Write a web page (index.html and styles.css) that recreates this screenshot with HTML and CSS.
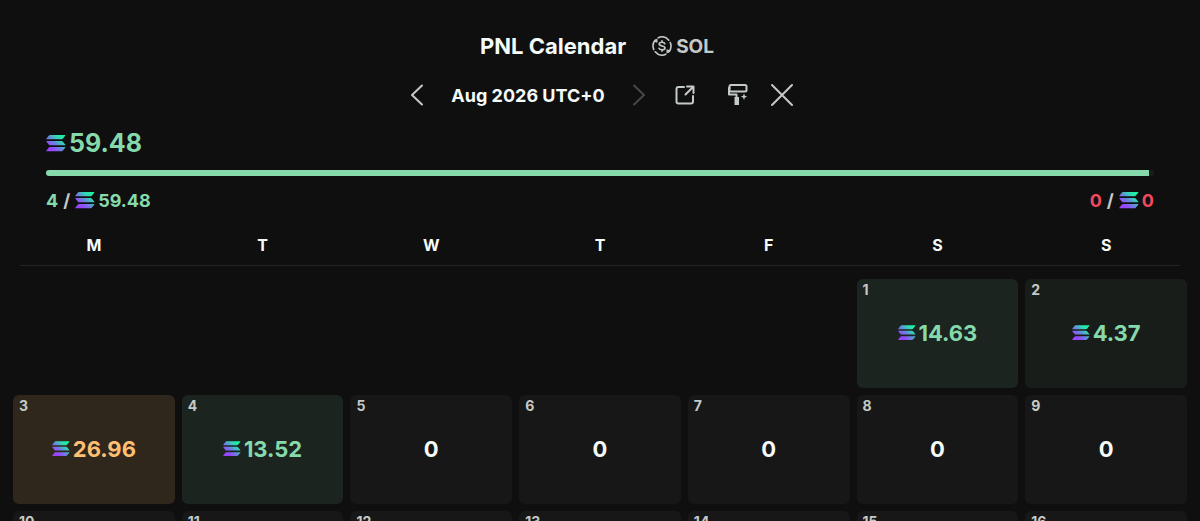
FILE: index.html
```html
<!DOCTYPE html>
<html lang="en">
<head>
    <meta charset="UTF-8">
    <meta name="viewport" content="width=device-width, initial-scale=1.0">
    <title>PNL Calendar</title>
    <link rel="stylesheet" href="styles.css">
</head>
<body>
    <svg class="sprite" aria-hidden="true">
        <defs>
            <linearGradient id="solGradient" gradientUnits="userSpaceOnUse" x1="18" y1="1" x2="4" y2="16">
                <stop offset="0" stop-color="#19f5a0"/>
                <stop offset="0.25" stop-color="#2fdcb0"/>
                <stop offset="0.55" stop-color="#6488dc"/>
                <stop offset="0.85" stop-color="#9945ff"/>
            </linearGradient>
            <symbol id="sol" viewBox="0 0 20 17">
                <path fill="url(#solGradient)" d="M4 0h14.800q1 0 .4.8l-2.500 3q-.5.5-1.200.5H.9q-1 0-.4-.8l2.400-3Q3.300 0 4 0zM.9 6h14.600q.7 0 1.200.5l2.500 3q.6.8-.4.8H4q-.7 0-1.100-.5l-2.400-3Q-.1 6 .9 6zM4 12h14.800q1 0 .4.8l-2.500 3q-.5.5-1.200.5H.9q-1 0-.4-.8l2.400-3q.4-.5 1.100-.5z"/>
            </symbol>
        </defs>
    </svg>

    <main class="app">
        <header class="title-row">
            <h1 class="title">PNL Calendar</h1>
            <button class="currency">
                <svg width="20" height="20" viewBox="0 0 20 20" fill="none" stroke="currentColor" stroke-width="1.600" stroke-linecap="round" aria-hidden="true">
                    <path d="M6.300 1.700A9 9 0 0 1 16.800 4.200M18.300 6.600A9 9 0 0 1 16.600 16M13.700 18.300A9 9 0 0 1 3.200 15.800M1.700 13.400A9 9 0 0 1 3.400 4"/>
                    <path fill="currentColor" stroke="none" d="M1 5.200l4.600-3-.2 4.600zM19 14.800l-4.600 3 .2-4.600z"/>
                    <path d="M12.800 7.800c-.3-1-1.300-1.500-2.800-1.500-1.600 0-2.800.6-2.800 1.800 0 2.600 5.800 1.200 5.800 3.900 0 1.200-1.300 1.800-3 1.800-1.600 0-2.700-.6-3-1.500M10 4.800v1.500M10 13.800v1.500"/>
                </svg>
                SOL
            </button>
        </header>

        <nav class="month-nav">
            <button class="icon-button" aria-label="Previous month">
                <svg width="14" height="22" viewBox="0 0 14 22"><path d="M12 1.500 2 11l10 9.500"/></svg>
            </button>
            <span class="month">Aug 2026 UTC+0</span>
            <button class="icon-button" aria-label="Next month" disabled>
                <svg width="14" height="22" viewBox="0 0 14 22"><path d="M2 1.500 12 11 2 20.500"/></svg>
            </button>
            <div class="actions">
                <button class="icon-button" aria-label="Share">
                    <svg width="24" height="24" viewBox="0 0 24 24"><path d="M11 4H5.500q-2 0-2 2v12.500q0 2 2 2H18q2 0 2-2V13M14 3.500h6.500V10M20 4l-7.500 7.500"/></svg>
                </button>
                <button class="icon-button" aria-label="Customize">
                    <svg width="24" height="24" viewBox="0 0 24 24"><rect x="3.500" y="2" width="17" height="6.500" rx="1.500"/><path d="M3.500 5H3v6.500h7.500V14"/><path class="solid" d="M8.500 14h4.500v8H8.500zM18 10.500l.9 2.300 2.300.9-2.300.9L18 16.900l-.9-2.300-2.300-.9 2.300-.9z"/></svg>
                </button>
            </div>
            <button class="icon-button" aria-label="Close">
                <svg width="24" height="24" viewBox="0 0 24 24"><path d="M2 2l20 20M22 2 2 22"/></svg>
            </button>
        </nav>

        <section class="summary">
            <div class="total amount gain"><svg class="sol"><use href="#sol"/></svg>59.48</div>
            <div class="bar"><div class="bar-fill"></div></div>
            <div class="split">
                <div class="amount gain">4 <span class="slash">/</span> <svg class="sol"><use href="#sol"/></svg>59.48</div>
                <div class="amount loss">0 <span class="slash">/</span> <svg class="sol"><use href="#sol"/></svg>0</div>
            </div>
        </section>

        <table class="calendar">
            <thead>
                <tr class="week weekdays">
                    <th>M</th><th>T</th><th>W</th><th>T</th><th>F</th><th>S</th><th>S</th>
                </tr>
            </thead>
            <tbody class="weeks">
                <tr class="week">
                    <td></td><td></td><td></td><td></td><td></td>
                    <td class="day win"><span class="date">1</span><span class="amount"><svg class="sol"><use href="#sol"/></svg>14.63</span></td>
                    <td class="day small-win"><span class="date">2</span><span class="amount"><svg class="sol"><use href="#sol"/></svg>4.37</span></td>
                </tr>
                <tr class="week">
                    <td class="day best"><span class="date">3</span><span class="amount"><svg class="sol"><use href="#sol"/></svg>26.96</span></td>
                    <td class="day win"><span class="date">4</span><span class="amount"><svg class="sol"><use href="#sol"/></svg>13.52</span></td>
                    <td class="day"><span class="date">5</span><span class="amount">0</span></td>
                    <td class="day"><span class="date">6</span><span class="amount">0</span></td>
                    <td class="day"><span class="date">7</span><span class="amount">0</span></td>
                    <td class="day"><span class="date">8</span><span class="amount">0</span></td>
                    <td class="day"><span class="date">9</span><span class="amount">0</span></td>
                </tr>
                <tr class="week">
                    <td class="day"><span class="date">10</span></td>
                    <td class="day"><span class="date">11</span></td>
                    <td class="day"><span class="date">12</span></td>
                    <td class="day"><span class="date">13</span></td>
                    <td class="day"><span class="date">14</span></td>
                    <td class="day"><span class="date">15</span></td>
                    <td class="day"><span class="date">16</span></td>
                </tr>
            </tbody>
        </table>
    </main>
</body>
</html>
```

FILE: styles.css
```css
* {
    margin: 0;
    padding: 0;
    box-sizing: border-box;
}

body {
    font-family: Inter, "Liberation Sans", sans-serif;
    font-weight: 700;
    background: #0f0f0f;
    color: #f5fbf8;
}

button {
    font: inherit;
    color: #c4cac7;
    background: none;
    border: none;
    cursor: pointer;
}

.sprite {
    position: absolute;
    width: 0;
    height: 0;
}

.app {
    height: 100vh;
    overflow: hidden;
    padding-top: 28px;
}

.title-row {
    display: flex;
    align-items: center;
    justify-content: center;
    gap: 26px;
    height: 36px;
    padding-right: 6px;
}

.title {
    font-size: 22px;
    font-weight: 700;
}

.currency {
    display: flex;
    align-items: center;
    gap: 4px;
    font-size: 19px;
}

.month-nav {
    display: flex;
    align-items: center;
    justify-content: center;
    gap: 20px;
    height: 36px;
    margin-top: 13px;
    padding-left: 4px;
}

.month {
    padding: 0 7px;
    font-size: 18px;
}

.icon-button {
    display: flex;
}

.icon-button svg {
    fill: none;
    stroke: currentColor;
    stroke-width: 2;
    stroke-linecap: round;
    stroke-linejoin: round;
}

.icon-button .solid {
    fill: currentColor;
    stroke: none;
}

.icon-button:disabled {
    color: #484848;
    cursor: default;
}

.actions {
    display: flex;
    align-items: center;
    gap: 29px;
    padding-left: 7px;
}

.summary {
    padding: 0 46px;
    margin-top: 12px;
}

.amount {
    display: flex;
    align-items: center;
    gap: 3px;
}

.sol {
    width: 20px;
    height: 17px;
    flex-shrink: 0;
}

.gain {
    color: #86d9ab;
}

.loss {
    color: #f2495c;
}

.slash {
    padding: 0 2px;
    color: #c4cac7;
}

.total {
    height: 36px;
    font-size: 25px;
}

.bar {
    height: 6px;
    margin-top: 9px;
    border-radius: 3px;
    background: #1c1c1c;
    overflow: hidden;
}

.bar-fill {
    width: calc(100% - 5px);
    height: 100%;
    background: #86d9ab;
}

.split {
    display: flex;
    justify-content: space-between;
    height: 28px;
    margin-top: 10px;
    font-size: 18px;
}

.calendar,
.weeks {
    display: block;
}

.calendar thead {
    display: block;
    margin: 19px 20px 0;
    border-bottom: 1px solid #242424;
}

.week {
    display: grid;
    grid-template-columns: repeat(7, 1fr);
    gap: 7px;
}

.weekdays {
    height: 32px;
    margin: 0 -7px;
    font-size: 16px;
    line-height: 24px;
}

.weeks {
    padding: 13px 13px 0;
}

.weeks .week {
    height: 109px;
    margin-bottom: 7px;
}

.day {
    position: relative;
    display: flex;
    align-items: center;
    justify-content: center;
    border-radius: 6px;
    background: #171717;
    font-size: 22px;
}

.day .amount {
    padding-bottom: 2px;
}

.day .sol {
    width: 18px;
    height: 16px;
}

.date {
    position: absolute;
    top: 2px;
    left: 6px;
    font-size: 14px;
    line-height: 18px;
    color: #c4cac7;
}

.win,
.small-win {
    color: #86d9ab;
    background: #1c2420;
}

.small-win {
    background: #191d1a;
}

.best {
    color: #ffbf73;
    background: #30271c;
}
```
